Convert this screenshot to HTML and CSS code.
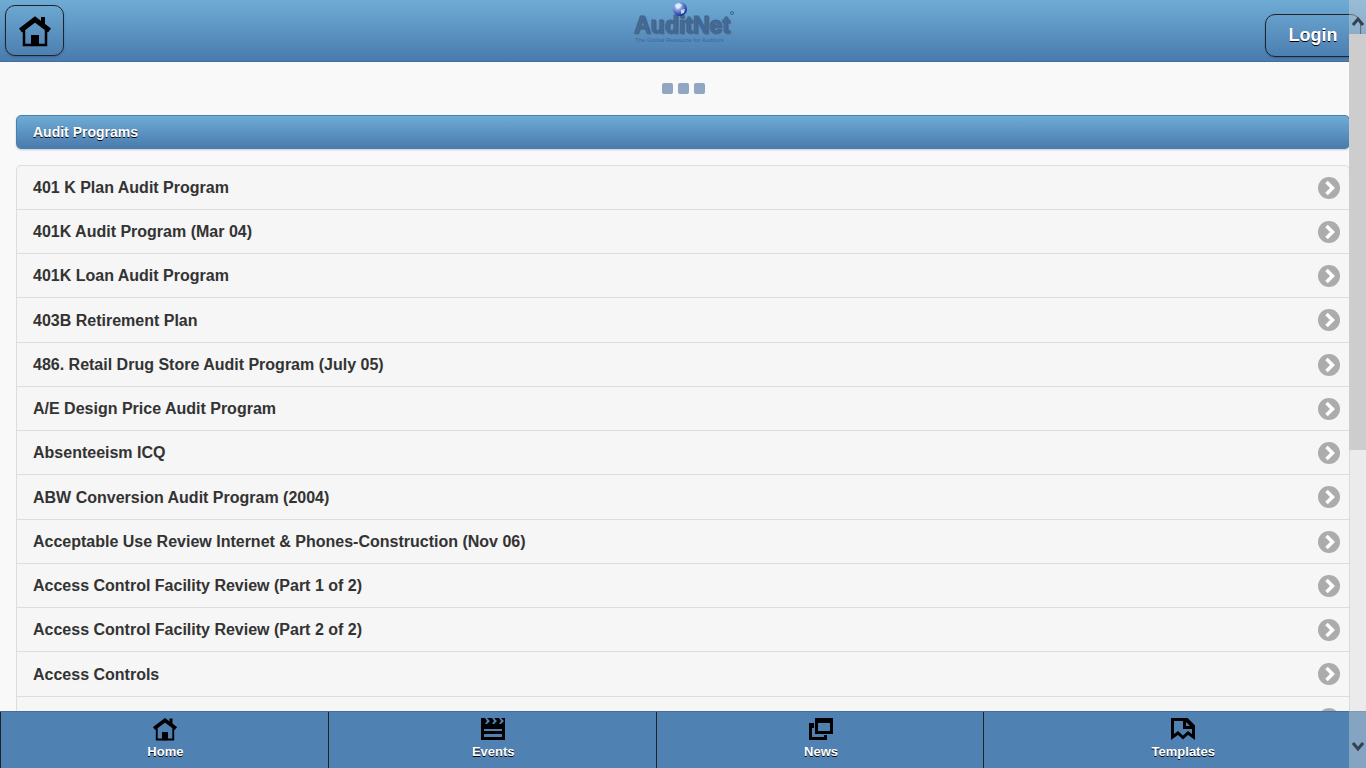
FILE: index.html
```html
<!DOCTYPE html>
<html lang="en">
<head>
	<meta charset="UTF-8">
	<meta name="viewport" content="width=device-width, initial-scale=1">
	<title>AuditNet</title>
	<link rel="stylesheet" href="styles.css">
</head>
<body>
	<svg class="defs" aria-hidden="true">
		<symbol id="home" viewBox="0 0 32 32">
			<path d="M22 2h4v9l-4-4z"/>
			<path d="M1.500 15.500L16 4.500 30.500 15.500" fill="none" stroke="#000" stroke-width="5"/>
			<path d="M5 15V30H27V15" fill="none" stroke="#000" stroke-width="2.500"/>
			<path d="M12 20h8v11h-8z"/>
		</symbol>
		<symbol id="arrow" viewBox="0 0 22 22">
			<circle cx="11" cy="11" r="11" fill="#acacac"/>
			<path d="M8.500 5L14.500 11l-6 6" fill="none" stroke="#fff" stroke-width="3.500"/>
		</symbol>
	</svg>

	<header class="header">
		<a class="btn btn-home" href="#" aria-label="Home"><svg width="32" height="32"><use href="#home"/></svg></a>
		<svg class="logo" width="104" height="46" viewBox="0 0 104 46">
			<defs>
				<radialGradient id="globe" cx="35%" cy="30%" r="70%">
					<stop offset="0" stop-color="#fff"/>
					<stop offset=".35" stop-color="#8fa8ec"/>
					<stop offset="1" stop-color="#15308c"/>
				</radialGradient>
			</defs>
			<text class="logo-name" x="3" y="33">AuditNet</text>
			<text class="logo-tag" x="4" y="42">The Global Resource for Auditors</text>
			<circle cx="101" cy="13" r="1.500" fill="none" stroke="#3a689b"/>
			<circle cx="49" cy="9" r="7" fill="url(#globe)"/>
			<path d="M44 5l4-2 3 2-2 3-3 1zM50 10l4-1-1 4-3 1z" fill="#e6edff" opacity=".8"/>
		</svg>
		<a class="btn btn-login" href="#">Login</a>
	</header>

	<main class="content">
		<div class="dots"><i></i><i></i><i></i></div>
		<h2 class="divider">Audit Programs</h2>
		<ul class="list">
			<li><a href="#">401 K Plan Audit Program<svg width="22" height="22"><use href="#arrow"/></svg></a></li>
			<li><a href="#">401K Audit Program (Mar 04)<svg width="22" height="22"><use href="#arrow"/></svg></a></li>
			<li><a href="#">401K Loan Audit Program<svg width="22" height="22"><use href="#arrow"/></svg></a></li>
			<li><a href="#">403B Retirement Plan<svg width="22" height="22"><use href="#arrow"/></svg></a></li>
			<li><a href="#">486. Retail Drug Store Audit Program (July 05)<svg width="22" height="22"><use href="#arrow"/></svg></a></li>
			<li><a href="#">A/E Design Price Audit Program<svg width="22" height="22"><use href="#arrow"/></svg></a></li>
			<li><a href="#">Absenteeism ICQ<svg width="22" height="22"><use href="#arrow"/></svg></a></li>
			<li><a href="#">ABW Conversion Audit Program (2004)<svg width="22" height="22"><use href="#arrow"/></svg></a></li>
			<li><a href="#">Acceptable Use Review Internet &amp; Phones-Construction (Nov 06)<svg width="22" height="22"><use href="#arrow"/></svg></a></li>
			<li><a href="#">Access Control Facility Review (Part 1 of 2)<svg width="22" height="22"><use href="#arrow"/></svg></a></li>
			<li><a href="#">Access Control Facility Review (Part 2 of 2)<svg width="22" height="22"><use href="#arrow"/></svg></a></li>
			<li><a href="#">Access Controls<svg width="22" height="22"><use href="#arrow"/></svg></a></li>
			<li><a href="#"><svg width="22" height="22"><use href="#arrow"/></svg></a></li>
		</ul>
	</main>

	<nav class="footer">
		<a href="#"><svg width="24" height="24"><use href="#home"/></svg>Home</a>
		<a href="#">
			<svg width="24" height="24" viewBox="0 0 24 24">
				<path d="M0 1h24v22H0z"/>
				<path d="M4 1h2l3 3-3 3H4l2-3zM11 1h2l3 3-3 3h-2l2-3zM18 1h2l3 3-3 3h-2l2-3zM3 12h18v2H3zM3 17h18v3H3z" fill="#4f82b3"/>
			</svg>Events
		</a>
		<a href="#">
			<svg width="24" height="24" viewBox="0 0 24 24">
				<path d="M6 1h18v16H6zM9 6v8h12V6z" fill-rule="evenodd"/>
				<path d="M0 6h5v5H3v9h12v-2h3v5H0z"/>
			</svg>News
		</a>
		<a href="#">
			<svg width="24" height="24" viewBox="0 0 24 24">
				<path d="M1.500 20V2.500H16L22.500 9V20L17 16l-5 4.500L7 16z" fill="none" stroke="#000" stroke-width="3"/>
				<path d="M12 2h5l6 6v4H12zM15 5v4h4z" fill-rule="evenodd"/>
			</svg>Templates
		</a>
	</nav>

	<!-- scrollbar laid over the page -->
	<div class="scroll" aria-hidden="true">
		<div class="scroll-end"><svg width="12" height="12" viewBox="0 0 12 12"><path d="M1 9l5-6 5 6"/></svg></div>
		<div class="scroll-track"><div class="scroll-thumb"></div></div>
		<div class="scroll-end scroll-down"><svg width="12" height="12" viewBox="0 0 12 12"><path d="M1 3l5 6 5-6"/></svg></div>
	</div>
</body>
</html>
```
FILE: styles.css
```css
*{
	box-sizing: border-box;
	margin: 0;
	padding: 0;
}
body{
	display: flex;
	flex-direction: column;
	height: 100vh;
	overflow: hidden;
	background: #f9f9f9;
	color: #333;
	font: bold 16px/21px "Liberation Sans", Arial, sans-serif;
}
a{
	color: inherit;
	text-decoration: none;
}
svg{
	flex: none;
}
.defs{
	position: absolute;
	width: 0;
	height: 0;
}

/* header */
.header{
	display: grid;
	grid-template-columns: 1fr auto 1fr;
	align-items: start;
	flex: none;
	height: 62px;
	padding: 0 5px;
	border-bottom: 1px solid #456f9a;
	background: linear-gradient(#6facd5, #497bae);
}
.btn{
	display: flex;
	align-items: center;
	justify-content: center;
	border: 1px solid #1f2429;
	border-radius: 10px;
	box-shadow: 0 1px 2px rgba(0,0,0,.2);
}
.btn-home{
	width: 59px;
	height: 51px;
	margin-top: 5px;
}
.btn-login{
	justify-self: end;
	width: 96px;
	height: 43px;
	margin-top: 14px;
	color: #fff;
	font-size: 18px;
	text-shadow: 0 1px 0 #000;
}
.logo-name{
	fill: #3a689b;
	stroke: #3a689b;
	font: bold 23px "Liberation Sans", Arial, sans-serif;
	text-shadow: 1px 1px 0 #5b6c80;
}
.logo-tag{
	fill: #3a689b;
	font: 6px "Liberation Sans", Arial, sans-serif;
}

/* content */
.content{
	flex: 1;
	min-height: 0;
	overflow: hidden;
	padding: 21px 16px 0;
}
.dots{
	display: flex;
	justify-content: center;
	gap: 5px;
}
.dots i{
	width: 11px;
	height: 11px;
	border-radius: 2px;
	background: #90a6c1;
}
.divider{
	margin: 21px 0 16px;
	padding: 6px 16px;
	border: 1px solid #4a7fb0;
	border-radius: 5px;
	background: linear-gradient(#6facd5, #497bae);
	box-shadow: 0 1px 2px rgba(0,0,0,.2);
	color: #fff;
	font-size: 14px;
	line-height: 20px;
	text-shadow: 0 1px 0 #000;
}
.list{
	border: 1px solid #ddd;
	border-radius: 5px;
	background: #f6f6f6;
	list-style: none;
}
.list li + li{
	border-top: 1px solid #ddd;
}
.list a{
	display: flex;
	align-items: center;
	height: 43px;
	padding: 0 9px 0 16px;
	text-shadow: 0 1px 0 #f3f3f3;
}
.list svg{
	margin-left: auto;
}
.list li:nth-child(4n) a{
	height: 44px;
}

/* footer */
.footer{
	display: grid;
	grid-template-columns: 24% 24% 24% 1fr;
	flex: none;
	height: 57px;
	border-top: 1px solid #456f9a;
	background: #4f82b3;
}
.footer a{
	display: flex;
	flex-direction: column;
	align-items: center;
	gap: 3px;
	padding: 5px 0 0 2px;
	border-left: 1px solid #1f2429;
	color: #fff;
	font-size: 13px;
	line-height: 16px;
	text-shadow: 0 1px 0 #000;
}
.footer a:last-child{
	padding-left: 16px;
}

/* scrollbar */
.scroll{
	position: fixed;
	top: 0;
	right: 0;
	bottom: 0;
	display: flex;
	flex-direction: column;
	width: 17px;
	background: rgba(216,216,216,.4);
}
.scroll-end{
	display: flex;
	align-items: center;
	justify-content: center;
	height: 34px;
	padding-top: 10px;
}
.scroll-down{
	padding: 0 0 10px;
}
.scroll-end path{
	fill: none;
	stroke: #35424f;
	stroke-width: 3;
}
.scroll-track{
	flex: 1;
}
.scroll-thumb{
	height: 416px;
	background: #cdcdcd;
}
```
